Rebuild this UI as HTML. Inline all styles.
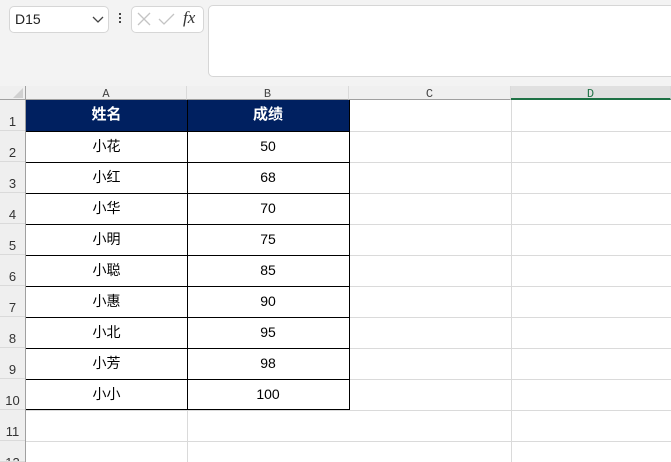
<!DOCTYPE html>
<html style="overflow:hidden;width:671px;height:462px"><head><meta charset="utf-8"><style>
*{margin:0;padding:0;box-sizing:border-box}
body{width:671px;height:462px;overflow:hidden;background:#f3f3f3;font-family:"Liberation Sans","Noto Sans CJK SC",sans-serif;position:relative}
.a{position:absolute}
.box{background:#fff;border:1px solid #d6d6d6;border-radius:5px}
.ch{position:absolute;top:86px;height:14px;font-family:"Liberation Mono",monospace;font-size:12px;color:#444;text-align:center;line-height:17px;background:#f0f0f0;border-right:1px solid #dadada;border-bottom:1px solid #a0a0a0}
.rh{position:absolute;left:0;width:25px;font-size:13px;color:#333;text-align:center;background:#efefef;border-bottom:1px solid #dadada}
.c{position:absolute;text-align:center;font-size:14px;color:#000;line-height:30px}
</style></head><body>
<div class="a box" style="left:9px;top:6px;width:100px;height:27px"></div>
<div class="a" style="left:15px;top:11px;font-size:14px;color:#222">D15</div>
<svg class="a" style="left:92px;top:16px" width="12" height="8"><path d="M1 1 L6 6 L11 1" stroke="#444" stroke-width="1.3" fill="none"/></svg>
<div class="a" style="left:119px;top:13px;width:2px;height:2px;background:#444;box-shadow:0 4px #444,0 8px #444"></div>
<div class="a box" style="left:131px;top:6px;width:73px;height:27px"></div>
<svg class="a" style="left:137px;top:11px" width="60" height="16"><path d="M1 2 L13 14 M13 2 L1 14" stroke="#c4c4c4" stroke-width="1.3"/><path d="M22 8 L27 13 L37 3" stroke="#c4c4c4" stroke-width="1.3" fill="none"/></svg>
<div class="a" style="left:183px;top:8px;font-family:'Liberation Serif',serif;font-style:italic;font-size:17px;color:#333">fx</div>
<div class="a box" style="left:208px;top:5px;width:480px;height:72px"></div>
<div class="a" style="left:0;top:86px;width:671px;height:376px;background:#fff"></div>
<div class="a" style="left:0;top:86px;width:26px;height:14px;background:#efefef;border-right:1px solid #a0a0a0;border-bottom:1px solid #a0a0a0"></div>
<svg class="a" style="left:12px;top:88px" width="12" height="11"><path d="M11 0 L11 10 L1 10Z" fill="#d0d0d0"/></svg>
<div class="ch" style="left:26px;width:161px">A</div>
<div class="ch" style="left:187px;width:162px">B</div>
<div class="ch" style="left:349px;width:162px">C</div>
<div class="ch" style="left:511px;width:160px;background:#e0e0e0;color:#1e7145;border-bottom:2px solid #1e7145">D</div>
<div class="a" style="left:25px;top:100px;width:1px;height:362px;background:#a0a0a0"></div>
<div class="rh" style="top:100px;height:31px;line-height:44px">1</div>
<div class="rh" style="top:131px;height:31px;line-height:44px">2</div>
<div class="rh" style="top:162px;height:31px;line-height:44px">3</div>
<div class="rh" style="top:193px;height:31px;line-height:44px">4</div>
<div class="rh" style="top:224px;height:31px;line-height:44px">5</div>
<div class="rh" style="top:255px;height:31px;line-height:44px">6</div>
<div class="rh" style="top:286px;height:31px;line-height:44px">7</div>
<div class="rh" style="top:317px;height:31px;line-height:44px">8</div>
<div class="rh" style="top:348px;height:31px;line-height:44px">9</div>
<div class="rh" style="top:379px;height:31px;line-height:44px">10</div>
<div class="rh" style="top:410px;height:31px;line-height:44px">11</div>
<div class="rh" style="top:441px;height:21px;line-height:44px;overflow:hidden">12</div>
<svg class="a" style="left:26px;top:100px" width="645" height="362">
<g stroke="#dadada" stroke-width="1">
<line x1="0" y1="341.5" x2="645" y2="341.5"/><line x1="0" y1="310.5" x2="645" y2="310.5"/>
<line x1="161.5" y1="310" x2="161.5" y2="362"/><line x1="485.5" y1="0" x2="485.5" y2="362"/>
<line x1="323" y1="31.5" x2="645" y2="31.5"/><line x1="323" y1="62.5" x2="645" y2="62.5"/><line x1="323" y1="93.5" x2="645" y2="93.5"/><line x1="323" y1="124.5" x2="645" y2="124.5"/><line x1="323" y1="155.5" x2="645" y2="155.5"/><line x1="323" y1="186.5" x2="645" y2="186.5"/><line x1="323" y1="217.5" x2="645" y2="217.5"/><line x1="323" y1="248.5" x2="645" y2="248.5"/><line x1="323" y1="279.5" x2="645" y2="279.5"/>
</g>
<rect x="0" y="0" width="323" height="31" fill="#002060"/>
<g stroke="#000" stroke-width="1">
<line x1="0" y1="31.5" x2="323" y2="31.5"/><line x1="0" y1="62.5" x2="323" y2="62.5"/><line x1="0" y1="93.5" x2="323" y2="93.5"/><line x1="0" y1="124.5" x2="323" y2="124.5"/><line x1="0" y1="155.5" x2="323" y2="155.5"/><line x1="0" y1="186.5" x2="323" y2="186.5"/><line x1="0" y1="217.5" x2="323" y2="217.5"/><line x1="0" y1="248.5" x2="323" y2="248.5"/><line x1="0" y1="279.5" x2="323" y2="279.5"/><line x1="0" y1="309.5" x2="323" y2="309.5"/>
<line x1="161.5" y1="0" x2="161.5" y2="310"/><line x1="323.5" y1="0" x2="323.5" y2="310"/>
</g>
</svg>
<div class="c" style="left:26px;top:100px;width:161px;color:#fff;font-weight:bold;font-size:15px">姓名</div>
<div class="c" style="left:187px;top:100px;width:162px;color:#fff;font-weight:bold;font-size:15px">成绩</div>
<div class="c" style="left:26px;top:131px;width:161px">小花</div><div class="c" style="left:187px;top:131px;width:162px">50</div>
<div class="c" style="left:26px;top:162px;width:161px">小红</div><div class="c" style="left:187px;top:162px;width:162px">68</div>
<div class="c" style="left:26px;top:193px;width:161px">小华</div><div class="c" style="left:187px;top:193px;width:162px">70</div>
<div class="c" style="left:26px;top:224px;width:161px">小明</div><div class="c" style="left:187px;top:224px;width:162px">75</div>
<div class="c" style="left:26px;top:255px;width:161px">小聪</div><div class="c" style="left:187px;top:255px;width:162px">85</div>
<div class="c" style="left:26px;top:286px;width:161px">小惠</div><div class="c" style="left:187px;top:286px;width:162px">90</div>
<div class="c" style="left:26px;top:317px;width:161px">小北</div><div class="c" style="left:187px;top:317px;width:162px">95</div>
<div class="c" style="left:26px;top:348px;width:161px">小芳</div><div class="c" style="left:187px;top:348px;width:162px">98</div>
<div class="c" style="left:26px;top:379px;width:161px">小小</div><div class="c" style="left:187px;top:379px;width:162px">100</div>
</body></html>
